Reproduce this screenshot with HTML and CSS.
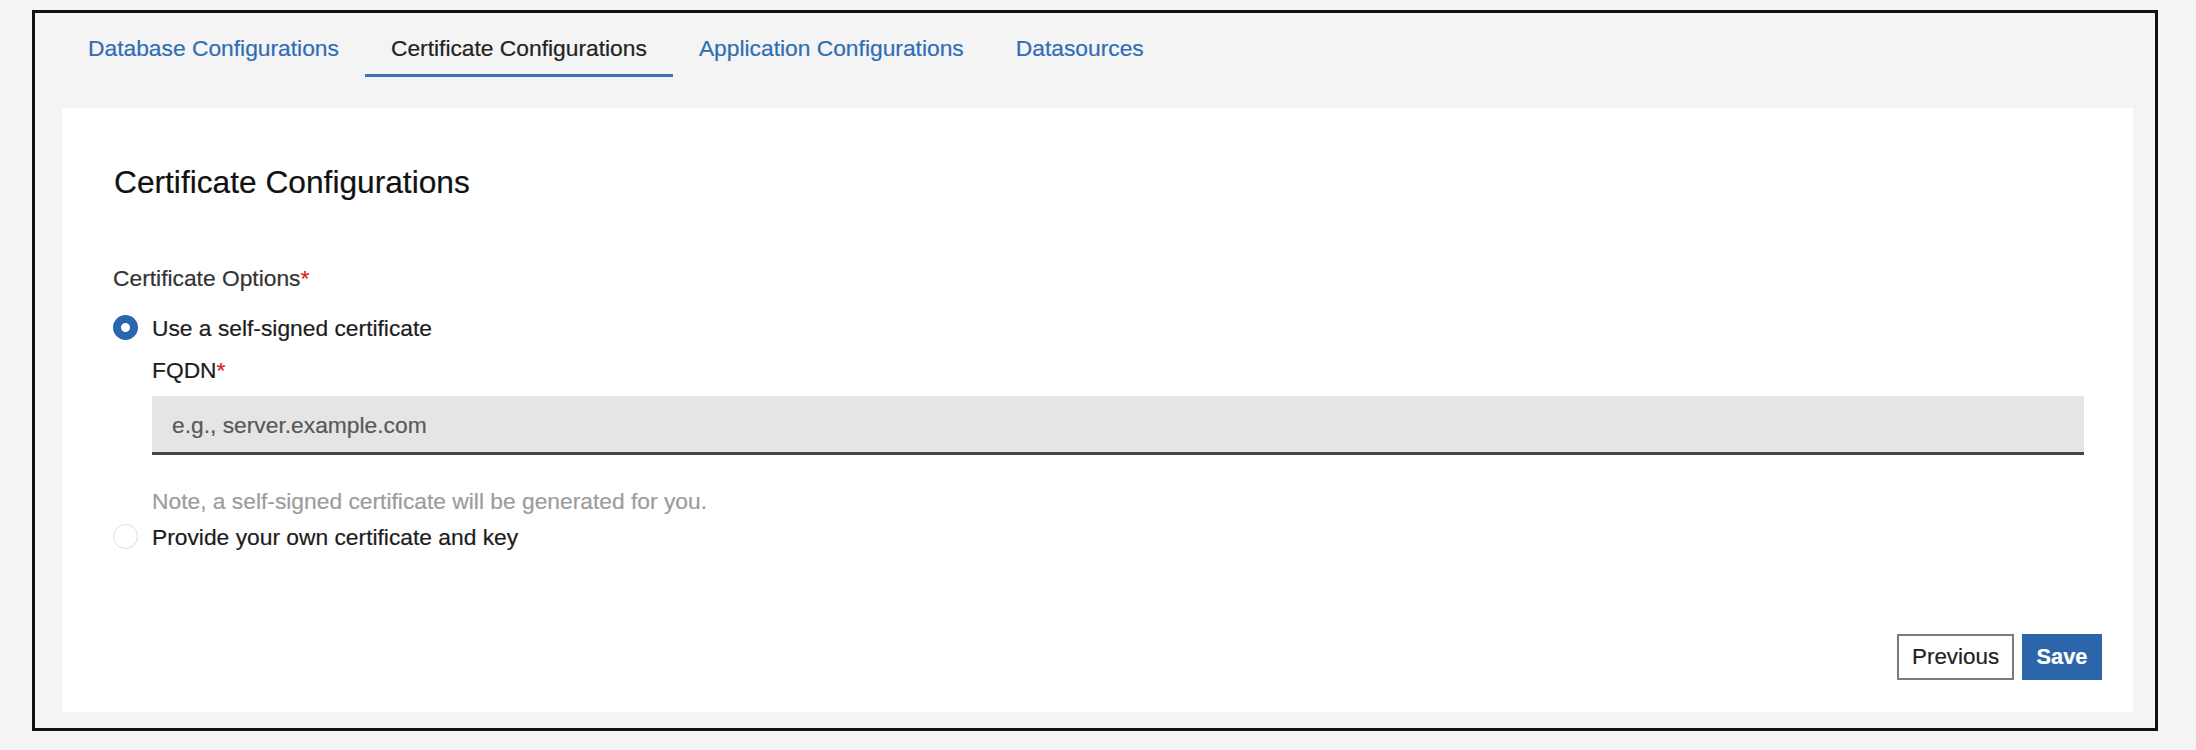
FILE: index.html
```html
<!DOCTYPE html>
<html lang="en">
<head>
<meta charset="utf-8">
<title>Certificate Configurations</title>
<link rel="stylesheet" href="styles.css">
</head>
<body>
<div class="frame">
  <nav class="tabs">
    <a class="tab">Database Configurations</a>
    <a class="tab active">Certificate Configurations</a>
    <a class="tab">Application Configurations</a>
    <a class="tab">Datasources</a>
  </nav>
  <section class="panel">
    <h1 class="title">Certificate Configurations</h1>
    <div class="form">
      <div class="group-label">Certificate Options<span class="req">*</span></div>
      <div class="radio-row">
        <span class="radio checked"></span>
        <span class="radio-text">Use a self-signed certificate</span>
      </div>
      <div class="sub">
        <div class="field-label">FQDN<span class="req">*</span></div>
        <div class="input"><span class="placeholder">e.g., server.example.com</span></div>
        <div class="note">Note, a self-signed certificate will be generated for you.</div>
      </div>
      <div class="radio-row second">
        <span class="radio"></span>
        <span class="radio-text">Provide your own certificate and key</span>
      </div>
    </div>
    <div class="footer">
      <button class="btn secondary">Previous</button>
      <button class="btn primary">Save</button>
    </div>
  </section>
</div>
</body>
</html>
```

FILE: styles.css
```css
html, body {
  margin: 0;
  padding: 0;
  background: #f4f4f4;
}
body {
  font-family: "Liberation Sans", Arial, sans-serif;
  font-size: 22.8px;
  color: #1c1c1c;
  padding: 10px 0 0 32px;
  -webkit-text-stroke: 0.2px currentColor;
}
.frame {
  box-sizing: border-box;
  width: 2126px;
  height: 721px;
  border: 3px solid #111;
  background: #f4f4f4;
  padding: 0 22px 0 27px;
  display: flex;
  flex-direction: column;
}
.tabs {
  display: flex;
  padding: 21px 0 0 0;
  margin-bottom: 31px;
}
.tab {
  display: block;
  padding: 0 26px 12px 26px;
  line-height: 28px;
  border-bottom: 3px solid transparent;
  color: #2f6db6;
  white-space: nowrap;
}
.tab.active {
  color: #222;
  border-bottom-color: #3a74b7;
}
.panel {
  box-sizing: border-box;
  background: #fff;
  height: 604px;
  padding: 55px 31px 32px 51px;
  display: flex;
  flex-direction: column;
}
.title {
  margin: 0 0 0 1px;
  font-weight: normal;
  font-size: 31.7px;
  line-height: 38px;
  color: #111;
}
.form {
  margin: 63px 18px 0 0;
  display: flex;
  flex-direction: column;
}
.group-label {
  line-height: 28px;
  color: #333;
}
.req {
  color: #e0201c;
}
.radio-row {
  display: flex;
  align-items: center;
  margin-top: 22px;
  height: 28px;
}
.radio-row.second {
  margin-top: 8px;
}
.radio {
  box-sizing: border-box;
  width: 25px;
  height: 25px;
  border-radius: 50%;
  border: 1.5px solid #d8dce2;
  background: #fff;
  margin-right: 14px;
  flex: none;
  position: relative;
  top: -1px;
}
.radio.checked {
  border: 8px solid #2a66ad;
}
.radio-text {
  line-height: 28px;
  color: #1c1c1c;
}
.sub {
  padding-left: 39px;
  display: flex;
  flex-direction: column;
}
.field-label {
  margin-top: 14px;
  line-height: 28px;
  color: #1c1c1c;
}
.input {
  box-sizing: border-box;
  margin-top: 12px;
  height: 59px;
  background: #e5e5e5;
  border-bottom: 3px solid #444;
  padding: 0 20px;
  display: flex;
  align-items: center;
}
.placeholder {
  color: #585858;
  line-height: 28px;
  position: relative;
  top: 1px;
}
.note {
  margin-top: 32px;
  line-height: 28px;
  color: #9c9c9c;
}
.footer {
  margin-top: auto;
  display: flex;
  justify-content: flex-end;
  gap: 8px;
}
.btn {
  box-sizing: border-box;
  height: 46px;
  font-family: "Liberation Sans", Arial, sans-serif;
  font-size: 22.4px;
  padding: 0 13px;
  cursor: pointer;
  border-radius: 0;
  -webkit-text-stroke: 0.2px currentColor;
}
.btn.secondary {
  width: 117px;
  background: #fff;
  color: #222;
  border: 2px solid #7b7b7b;
}
.btn.primary {
  width: 80px;
  background: #2d65aa;
  color: #fff;
  border: 1px solid #2d65aa;
  font-weight: bold;
  font-size: 21.8px;
}
```
